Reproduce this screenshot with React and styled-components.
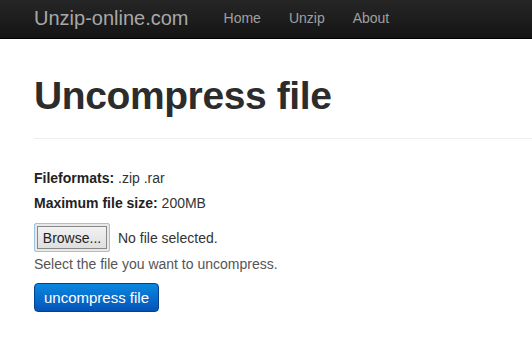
import React from "react";
import styled, { createGlobalStyle } from "styled-components";

const GlobalStyle = createGlobalStyle`
  html, body {
    margin: 0;
    padding: 0;
    background: #fff;
    font-family: "Liberation Sans", Arial, sans-serif;
    color: #333;
  }
`;

const NavBar = styled.div`
  height: 38px;
  background: linear-gradient(#262626, #141414);
  border-bottom: 1px solid #000;
  display: flex;
  align-items: center;
  padding-left: 34px;
`;

const Brand = styled.a`
  font-size: 20px;
  color: #a8a8a8;
  text-decoration: none;
  margin-right: 35px;
  margin-top: -2px;
`;

const NavLink = styled.a`
  font-size: 14px;
  color: #a0a0a0;
  text-decoration: none;
  margin-right: 28px;
  margin-top: -2px;
`;

const Container = styled.div`
  padding: 0 0 0 34px;
`;

const PageHeader = styled.div`
  padding-top: 35px;
  padding-bottom: 20px;
  border-bottom: 1px solid #eee;
`;

const Title = styled.h1`
  margin: 0;
  font-size: 39px;
  font-weight: bold;
  color: #2c2c2c;
  line-height: 44px;
  letter-spacing: -0.4px;
`;

const InfoList = styled.div`
  margin-top: 30px;
  display: flex;
  flex-direction: column;
  gap: 7px;
`;

const InfoRow = styled.div`
  font-size: 14px;
  line-height: 18px;
  color: #333;
  b {
    color: #222;
  }
`;

const FileRow = styled.div`
  margin-top: 11px;
  display: flex;
  align-items: center;
  gap: 8px;
  font-size: 14px;
  color: #333;
`;

const BrowseButton = styled.button`
  width: 76px;
  height: 29px;
  font-family: inherit;
  font-size: 14px;
  color: #222;
  background: linear-gradient(#f4f4f4, #dcdcdc);
  border: 1px solid #9cc3e0;
  box-shadow: inset 0 0 0 2px #e8e8e8, inset 0 0 0 3px #888;
  border-radius: 2px;
  padding: 0;
`;

const HelpText = styled.div`
  font-size: 14px;
  color: #555;
  margin-top: 4px;
`;

const SubmitButton = styled.button`
  margin-top: 11px;
  width: 125px;
  height: 29px;
  font-family: inherit;
  font-size: 15px;
  color: #fff;
  background: linear-gradient(#0a88e0, #0553b8);
  border: 1px solid #04408f;
  border-radius: 4px;
  padding: 0;
`;

export default function App() {
  return (
    <>
      <GlobalStyle />
      <NavBar>
        <Brand href="#">Unzip-online.com</Brand>
        <NavLink href="#">Home</NavLink>
        <NavLink href="#">Unzip</NavLink>
        <NavLink href="#">About</NavLink>
      </NavBar>
      <Container>
        <PageHeader>
          <Title>Uncompress file</Title>
        </PageHeader>
        <InfoList>
          <InfoRow>
            <b>Fileformats:</b> .zip .rar
          </InfoRow>
          <InfoRow>
            <b>Maximum file size:</b> 200MB
          </InfoRow>
        </InfoList>
        <FileRow>
          <BrowseButton>Browse...</BrowseButton>
          <span>No file selected.</span>
        </FileRow>
        <HelpText>Select the file you want to uncompress.</HelpText>
        <SubmitButton>uncompress file</SubmitButton>
      </Container>
    </>
  );
}
